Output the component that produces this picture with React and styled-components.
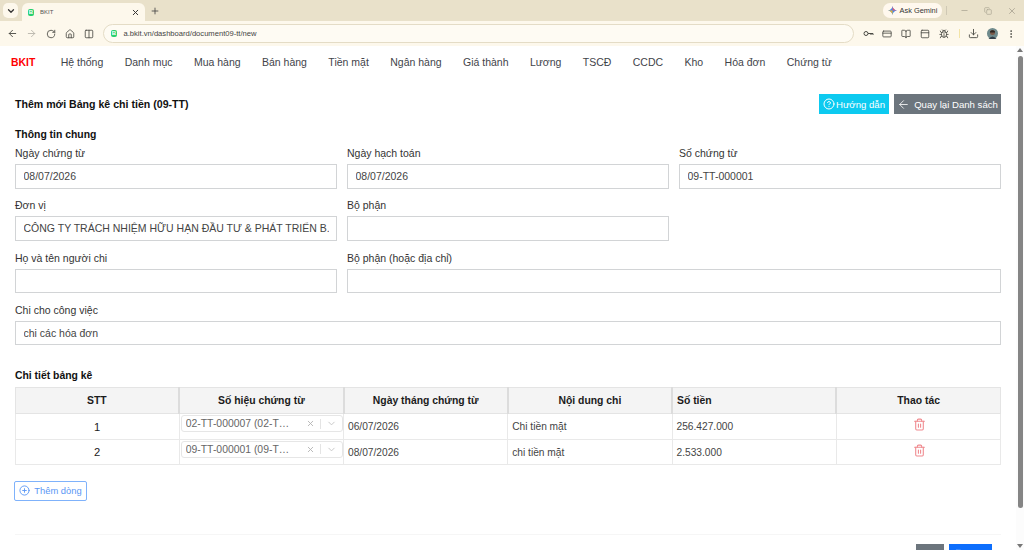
import React from "react";
import styled, { createGlobalStyle } from "styled-components";
import {
	ArrowLeft,
	ArrowRight,
	RotateCw,
	Home,
	Columns2,
	X,
	Plus,
	ChevronDown,
	CreditCard,
	BookOpen,
	PanelTop,
	Bug,
	Download,
	EllipsisVertical,
	Minus,
	Copy,
	CircleHelp,
	CirclePlus,
	Trash2,
	Save
} from "lucide-react";

const GlobalStyle = createGlobalStyle`
	html, body {
		margin: 0;
		padding: 0;
		background: #fff;
		overflow: hidden;
	}
	* { box-sizing: border-box; }
	body {
		font-family: "Liberation Sans", Arial, sans-serif;
		color: #212529;
	}
`;

const menu = ["Hệ thống", "Danh mục", "Mua hàng", "Bán hàng", "Tiền mặt", "Ngân hàng", "Giá thành", "Lương", "TSCĐ", "CCDC", "Kho", "Hóa đơn", "Chứng từ"];

const rows = [
	{ stt: 1, code: "02-TT-000007 (02-T…", date: "06/07/2026", note: "Chi tiền mặt", amount: "256.427.000" },
	{ stt: 2, code: "09-TT-000001 (09-T…", date: "08/07/2026", note: "chi tiền mặt", amount: "2.533.000" }
];

export default function App() {
	return (
		<Screen>
			<GlobalStyle />
			<TabStrip>
				<TabMenu><ChevronDown size={10} strokeWidth={3} /></TabMenu>
				<Tab>
					<Favicon>B</Favicon>
					<TabTitle>BKIT</TabTitle>
					<X size={9} strokeWidth={2.6} color="#333" />
				</Tab>
				<NewTab><Plus size={10} strokeWidth={2} /></NewTab>
				<Spacer />
				<Gemini>
					<svg width="9" height="9" viewBox="0 0 24 24">
						<path d="M12 0 C13 7 17 11 24 12 C17 13 13 17 12 24 C11 17 7 13 0 12 C7 11 11 7 12 0Z" fill="#3f8cf0" />
						<path d="M12 0 C13 7 17 11 24 12 L12 12Z" fill="#e8566b" />
						<path d="M12 24 C11 17 7 13 0 12 L12 12Z" fill="#f0b429" />
					</svg>
					Ask Gemini
				</Gemini>
				<WindowDivider />
				<WindowButton><Minus size={9} /></WindowButton>
				<WindowButton><Copy size={8} /></WindowButton>
				<WindowButton><X size={10} /></WindowButton>
			</TabStrip>

			<Toolbar>
				<ToolIcon><ArrowLeft size={11} /></ToolIcon>
				<ToolIcon $off><ArrowRight size={11} /></ToolIcon>
				<ToolIcon><RotateCw size={10} /></ToolIcon>
				<ToolIcon><Home size={10} /></ToolIcon>
				<ToolIcon><Columns2 size={10} /></ToolIcon>
				<Omnibox>
					<Favicon>B</Favicon>
					<Url>a.bkit.vn/dashboard/document09-tt/new</Url>
				</Omnibox>
				<RightTools>
					<ToolIcon>
						<svg width="11" height="11" viewBox="0 0 22 22" fill="none" stroke="currentColor" strokeWidth="2">
							<circle cx="6" cy="11" r="4" />
							<path d="M10 11 H20 V14 M16 11 V14" />
						</svg>
					</ToolIcon>
					<ToolIcon><CreditCard size={10} /></ToolIcon>
					<ToolIcon><BookOpen size={10} /></ToolIcon>
					<ToolIcon><PanelTop size={10} /></ToolIcon>
					<ToolIcon><Bug size={10} /></ToolIcon>
					<ToolbarDivider />
					<ToolIcon><Download size={11} /></ToolIcon>
					<Avatar>
						<svg width="11" height="11" viewBox="0 0 22 22">
							<circle cx="11" cy="11" r="11" fill="#6f8a8c" />
							<circle cx="11" cy="9" r="5" fill="#7b5a48" />
							<path d="M6 7 Q11 2 16 7 L16 9 L6 9Z" fill="#2b2522" />
							<path d="M3 22 Q11 12 19 22Z" fill="#34404a" />
						</svg>
					</Avatar>
					<ToolIcon><EllipsisVertical size={10} /></ToolIcon>
				</RightTools>
			</Toolbar>

			<Viewport>
				<Page>
					<Nav>
						<Brand>BKIT</Brand>
						{menu.map(item => <NavLink key={item}>{item}</NavLink>)}
					</Nav>

					<Content>
						<HeadRow>
							<PageTitle>Thêm mới Bảng kê chi tiền (09-TT)</PageTitle>
							<HeadActions>
								<HelpButton><CircleHelp size={12} />Hướng dẫn</HelpButton>
								<BackButton><ArrowLeft size={13} strokeWidth={1.5} />Quay lại Danh sách</BackButton>
							</HeadActions>
						</HeadRow>

						<SectionTitle>Thông tin chung</SectionTitle>
						<FormGrid>
							<Field>
								<Label>Ngày chứng từ</Label>
								<Input readOnly value="08/07/2026" />
							</Field>
							<Field>
								<Label>Ngày hạch toán</Label>
								<Input readOnly value="08/07/2026" />
							</Field>
							<Field>
								<Label>Số chứng từ</Label>
								<Input readOnly value="09-TT-000001" />
							</Field>
							<Field>
								<Label>Đơn vị</Label>
								<Input readOnly value="CÔNG TY TRÁCH NHIỆM HỮU HẠN ĐẦU TƯ & PHÁT TRIỂN B." />
							</Field>
							<Field>
								<Label>Bộ phận</Label>
								<Input readOnly value="" />
							</Field>
							<Field />
							<Field>
								<Label>Họ và tên người chi</Label>
								<Input readOnly value="" />
							</Field>
							<Field $span={2}>
								<Label>Bộ phận (hoặc địa chỉ)</Label>
								<Input readOnly value="" />
							</Field>
							<Field $span={3}>
								<Label>Chi cho công việc</Label>
								<Input readOnly value="chi các hóa đơn" />
							</Field>
						</FormGrid>

						<TableTitle>Chi tiết bảng kê</TableTitle>
						<Table>
							<thead>
								<tr>
									<Th>STT</Th>
									<Th>Số hiệu chứng từ</Th>
									<Th>Ngày tháng chứng từ</Th>
									<Th>Nội dung chi</Th>
									<Th $left>Số tiền</Th>
									<Th>Thao tác</Th>
								</tr>
							</thead>
							<tbody>
								{rows.map(row => (
									<tr key={row.stt}>
										<SttCell>{row.stt}</SttCell>
										<SelectCell>
											<SelectBox>
												<SelectValue>{row.code}</SelectValue>
												<X size={9} color="#b3b3b3" strokeWidth={2.4} />
												<SelectDivider />
												<ChevronDown size={11} color="#c4c4c4" />
											</SelectBox>
										</SelectCell>
										<Td>{row.date}</Td>
										<Td>{row.note}</Td>
										<Td>{row.amount}</Td>
										<ActionCell><Trash2 size={13} color="#f08a8f" /></ActionCell>
									</tr>
								))}
							</tbody>
						</Table>

						<AddButton><CirclePlus size={11} />Thêm dòng</AddButton>
					</Content>

					<Footer>
						<FooterGray />
						<FooterSave><Save size={10} color="#cfe2ff" /></FooterSave>
					</Footer>
				</Page>
				<Scrollbar>
					<ScrollArrow $up />
					<ScrollThumb />
					<ScrollArrow />
				</Scrollbar>
			</Viewport>
		</Screen>
	);
}

const Screen = styled.div`
	width: 1024px;
	height: 550px;
	display: flex;
	flex-direction: column;
	overflow: hidden;
`;

const TabStrip = styled.div`
	height: 21px;
	flex: none;
	display: flex;
	align-items: center;
	padding-left: 3px;
	background: #e9e1ca;
`;

const TabMenu = styled.div`
	width: 15px;
	height: 15px;
	margin-right: 4px;
	border-radius: 5px;
	background: #fdf8ec;
	display: flex;
	align-items: center;
	justify-content: center;
	color: #333;
`;

const Tab = styled.div`
	width: 123px;
	height: 18px;
	margin-top: 3px;
	padding: 0 5px 0 6px;
	border-radius: 6px 6px 0 0;
	background: #fdf8ec;
	display: flex;
	align-items: center;
	gap: 4px;
`;

const Favicon = styled.span`
	width: 6px;
	height: 7px;
	flex: none;
	border-radius: 2px;
	background: #27d06f;
	color: #fff;
	font-size: 6px;
	font-weight: 700;
	line-height: 7px;
	text-align: center;
`;

const TabTitle = styled.span`
	flex: 1;
	font-size: 6px;
	color: #555;
	padding-left: 2px;
`;

const NewTab = styled.div`
	width: 20px;
	display: flex;
	justify-content: center;
	color: #444;
`;

const Spacer = styled.div`
	flex: 1;
`;

const Gemini = styled.div`
	width: 59px;
	height: 15px;
	border-radius: 7px;
	background: #fff8ee;
	display: flex;
	align-items: center;
	justify-content: center;
	gap: 3px;
	font-size: 7.4px;
	color: #333;
`;

const WindowDivider = styled.div`
	width: 1px;
	height: 9px;
	margin: 0 5px 0 4px;
	background: #cfc8b4;
`;

const WindowButton = styled.div`
	width: 24px;
	display: flex;
	justify-content: center;
	color: #a9a493;
`;

const Toolbar = styled.div`
	height: 25px;
	flex: none;
	display: flex;
	align-items: center;
	padding-left: 3px;
	background: #fdf8ec;
`;

const ToolIcon = styled.div`
	width: 19px;
	display: flex;
	justify-content: center;
	color: ${p => (p.$off ? "#b9b6ac" : "#4a4a44")};
`;

const Omnibox = styled.div`
	width: 751px;
	height: 19px;
	margin-left: 5px;
	padding-left: 7px;
	border: 1px solid #e4dcc6;
	border-radius: 10px;
	background: #fefbf3;
	display: flex;
	align-items: center;
`;

const Url = styled.span`
	margin-left: 6.5px;
	font-size: 7.6px;
	color: #444;
`;

const RightTools = styled.div`
	margin-left: 4.5px;
	display: flex;
	align-items: center;
`;

const ToolbarDivider = styled.div`
	width: 1px;
	height: 9px;
	margin: 0 4px 0 5px;
	background: #f3e4a6;
`;

const Avatar = styled.div`
	width: 19px;
	display: flex;
	justify-content: center;
`;

const Viewport = styled.div`
	flex: 1;
	min-height: 0;
	display: flex;
`;

const Page = styled.div`
	flex: 1;
	min-width: 0;
	overflow: hidden;
`;

const Nav = styled.nav`
	height: 32px;
	padding-left: 11px;
	display: flex;
	align-items: center;
	gap: 21.4px;
`;

const Brand = styled.span`
	margin-right: 4px;
	font-size: 10.4px;
	font-weight: 700;
	color: #f00;
`;

const NavLink = styled.span`
	font-size: 10.5px;
	color: #3f444a;
`;

const Content = styled.div`
	padding: 16px 15px 0;
`;

const HeadRow = styled.div`
	height: 20px;
	display: flex;
	align-items: center;
	justify-content: space-between;
`;

const PageTitle = styled.h1`
	margin: 0;
	font-size: 10.6px;
	font-weight: 700;
	color: #111;
`;

const HeadActions = styled.div`
	display: flex;
	gap: 5px;
`;

const HelpButton = styled.button`
	height: 20px;
	width: 70px;
	padding: 0;
	border: 0;
	background: #0dcaf0;
	color: #fff;
	font: 400 9.6px "Liberation Sans", Arial, sans-serif;
	display: flex;
	align-items: center;
	justify-content: center;
	gap: 1px;
`;

const BackButton = styled(HelpButton)`
	width: 107px;
	gap: 4px;
	background: #6c757d;
`;

const SectionTitle = styled.h2`
	margin: 14px 0 0;
	font-size: 10.4px;
	line-height: 13px;
	font-weight: 700;
	color: #111;
`;

const FormGrid = styled.div`
	margin-top: 5px;
	display: grid;
	grid-template-columns: repeat(3, 322px);
	column-gap: 10px;
	row-gap: 9.8px;
`;

const Field = styled.div`
	grid-column: span ${p => p.$span || 1};
	display: flex;
	flex-direction: column;
	gap: 4px;
`;

const Label = styled.label`
	font-size: 10.5px;
	line-height: 14px;
	color: #333;
`;

const Input = styled.input`
	width: 100%;
	height: 24.5px;
	padding: 0 7.5px 1px;
	border: 1px solid #d2d4d6;
	background: #fff;
	outline: 0;
	font: 400 10.5px "Liberation Sans", Arial, sans-serif;
	color: #444;
`;

const TableTitle = styled.h2`
	margin: 24px 0 5px;
	font-size: 10.4px;
	line-height: 13px;
	font-weight: 700;
	color: #111;
`;

const Table = styled.table`
	width: 986.5px;
	margin-left: -0.5px;
	table-layout: fixed;
	border-collapse: collapse;
	font-size: 10.2px;
`;

const Th = styled.th`
	height: 26px;
	padding: 0 ${p => (p.$left ? "4px" : "0")};
	border: 1px solid #e4e4e4;
	border-right: 2px solid #dcdcdc;
	background: #f4f4f4;
	text-align: ${p => (p.$left ? "left" : "center")};
	font-size: 10.4px;
	font-weight: 700;
	color: #1b1b1b;

	&:last-child {
		border-right: 1px solid #e4e4e4;
	}
`;

const Td = styled.td`
	height: 25.5px;
	padding: 0 4px;
	border: 1px solid #e9e9e9;
	color: #444;
`;

const SttCell = styled(Td)`
	text-align: center;
	font-size: 11.2px;
	color: #222;
`;

const SelectCell = styled(Td)`
	padding: 0;
	vertical-align: top;
	font-size: 10.4px;
`;

const SelectBox = styled.div`
	height: 17px;
	margin: 1px 0 0 1px;
	padding: 0 5px 0 4px;
	border: 1px solid #e6e6e6;
	border-radius: 3px;
	display: flex;
	align-items: center;
	color: #666;
`;

const SelectValue = styled.span`
	flex: 1;
	white-space: nowrap;
	overflow: hidden;
`;

const SelectDivider = styled.span`
	width: 1px;
	height: 10px;
	margin: 0 5px;
	background: #e4e4e4;
`;

const ActionCell = styled(Td)`
	text-align: center;
	vertical-align: top;
	padding: 4px 2px 0 4px;
`;

const AddButton = styled.button`
	margin: 15.5px 0 0 -1px;
	width: 73px;
	height: 20px;
	padding: 0;
	border: 1px solid #7fb2fb;
	border-radius: 2px;
	background: #fff;
	color: #5a97f5;
	font: 400 9.4px "Liberation Sans", Arial, sans-serif;
	display: flex;
	align-items: center;
	justify-content: center;
	gap: 4px;
`;

const Footer = styled.div`
	margin: 33px 0 0 15px;
	width: 986px;
	height: 40px;
	padding: 9px 9px 0 0;
	border-top: 1px solid #f6f6f6;
	display: flex;
	justify-content: flex-end;
	gap: 5px;
`;

const FooterGray = styled.div`
	width: 28px;
	height: 20px;
	background: #6c757d;
`;

const FooterSave = styled.div`
	width: 43px;
	height: 20px;
	padding: 1px 0 0 5px;
	background: #0d6efd;
`;

const Scrollbar = styled.div`
	width: 8px;
	flex: none;
	padding: 2px 1px;
	background: #fcfcfc;
	display: flex;
	flex-direction: column;
	align-items: center;
`;

const ScrollThumb = styled.div`
	width: 5px;
	height: 452px;
	margin-top: 4px;
	border-radius: 3px;
	background: #858585;
`;

const ScrollArrow = styled.div`
	width: 0;
	height: 0;
	margin-top: ${p => (p.$up ? "0" : "auto")};
	border-left: 3px solid transparent;
	border-right: 3px solid transparent;
	${p => (p.$up ? "border-bottom: 4px solid #777;" : "border-top: 4px solid #777;")}
`;
